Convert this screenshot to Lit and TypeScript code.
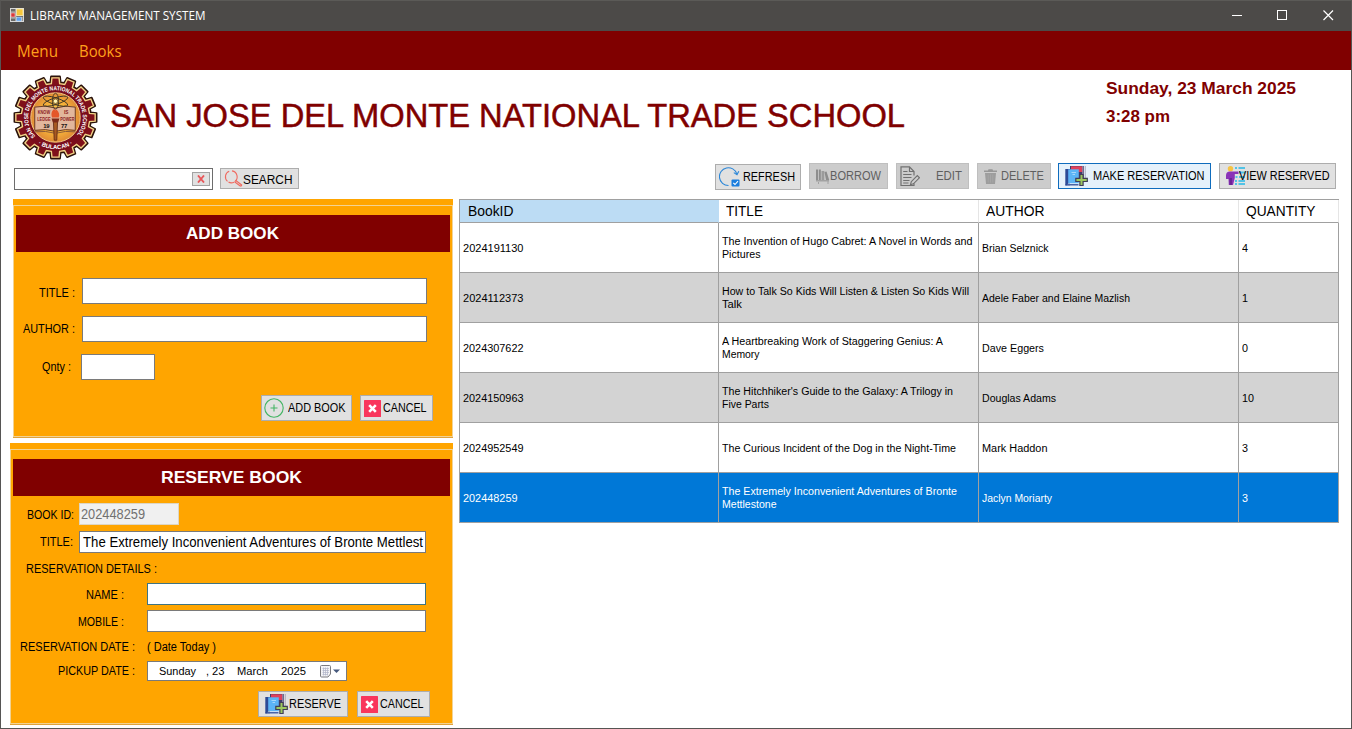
import { LitElement, html, css } from "lit";
import { customElement, property } from "lit/decorators.js";

/** Single line of text condensed or widened to an exact width. */
@customElement("fit-text")
class FitText extends LitElement {
  @property() text = "";
  @property({ type: Number }) w = 0;
  static styles = css`
    :host { display: block; flex: none; }
    span { display: inline-block; white-space: pre; transform-origin: 0 50%; }
  `;
  render() {
    return html`<span>${this.text}</span>`;
  }
  updated() {
    const s = this.renderRoot.querySelector("span") as HTMLElement;
    s.style.transform = "none";
    const natural = s.getBoundingClientRect().width;
    this.style.width = `${this.w}px`;
    s.style.transform = `scaleX(${this.w / natural})`;
  }
}

const t = (text: string, w: number, cls = "") =>
  html`<fit-text class=${cls} .text=${text} .w=${w}></fit-text>`;

const gear = (teeth: number, ro: number, ri: number, half: number) => {
  const pts: string[] = [];
  for (let i = 0; i < teeth; i++) {
    const a = (i / teeth) * Math.PI * 2 - Math.PI / 2;
    const p = (r: number, d: number) =>
      `${(r * Math.cos(a + d)).toFixed(2)},${(r * Math.sin(a + d)).toFixed(2)}`;
    pts.push(p(ri, -half * 1.35), p(ro, -half), p(ro, half), p(ri, half * 1.35));
  }
  return "M" + pts.join("L") + "Z";
};

const logo = html`<svg class="logo" viewBox="-43 -43 86 86">
  <defs>
    <radialGradient id="sun">
      <stop offset="0" stop-color="#fff08a" /><stop offset=".55" stop-color="#f8b83a" /><stop offset="1" stop-color="#e08a35" />
    </radialGradient>
    <path id="arcTop" d="M-20.300,18.900 A27.700,27.700 0 1 1 20.300,18.900" />
    <path id="arcBottom" d="M-20,25 A32,32 0 0 0 20,25" />
  </defs>
  <path d=${gear(16, 41.8, 36, 0.108)} fill="#7c1018" stroke="#2a120a" stroke-width="1.800" stroke-linejoin="round" />
  <path d=${gear(16, 40.3, 34.6, 0.09)} fill="#80101a" stroke="#f0d488" stroke-width="1.400" />
  <circle r="33.500" fill="#7a0d1c" />
  <circle r="25" fill="url(#sun)" stroke="#f0c884" stroke-width="1" />
  <g fill="#fff" font-family="Liberation Sans" font-size="6" font-weight="bold">
    <text><textPath href="#arcTop" textLength="126" lengthAdjust="spacingAndGlyphs">SAN JOSE DEL MONTE NATIONAL TRADE SCHOOL</textPath></text>
    <text><textPath href="#arcBottom" startOffset="50%" text-anchor="middle">· BULACAN ·</textPath></text>
  </g>
  <path d="M-21,-10.500Q-10,-13 0,-9.500Q10,-13 20,-10.500V13Q10,11 0,14Q-10,11 -21,13Z" fill="#e2b69c" stroke="#6b3a22" stroke-width="1" />
  <path d="M-21,14.500Q-10,13 0,16Q10,13 20,14.500" fill="none" stroke="#8a5a3a" stroke-width="1" />
  <g fill="none" stroke="#3d3426" stroke-width=".9">
    <ellipse cy="-16.500" rx="13" ry="3.400" transform="rotate(18 0 -16.5)" />
    <ellipse cy="-16.500" rx="13" ry="3.400" transform="rotate(-18 0 -16.5)" />
    <ellipse cy="-16.500" rx="3.200" ry="8" />
  </g>
  <circle cy="-16.500" r="2.300" fill="#fff3b0" stroke="#4d3a1c" stroke-width=".7" />
  <path d="M-2.200,2L-1.300,23H1.300L2.200,2Z" fill="#a85a22" stroke="#5a2410" stroke-width=".8" />
  <path d="M-4,1H4L2.600,5H-2.600Z" fill="#7c2a18" />
  <path d="M-3.500,0Q-5.500,-5 -1,-9Q-1,-6 1,-8Q5,-4 3.200,0Z" fill="#e4572a" />
  <g font-family="Liberation Sans" font-weight="bold" font-size="5.400">
    <g fill="#8c1c22">
      <text x="-18" y="-3.600" textLength="12.500" lengthAdjust="spacingAndGlyphs">KNOW</text>
      <text x="-18.500" y="3.200" textLength="13.500" lengthAdjust="spacingAndGlyphs">LEDGE</text>
      <text x="8.500" y="-3.600" textLength="4.500" lengthAdjust="spacingAndGlyphs">IS</text>
      <text x="4.800" y="3.200" textLength="14.500" lengthAdjust="spacingAndGlyphs">POWER</text>
    </g>
    <text x="-12.500" y="10.700" fill="#151010" font-size="6" textLength="6.500">19</text>
    <text x="5.500" y="10.700" fill="#151010" font-size="6" textLength="6.500">77</text>
  </g>
</svg>`;

const appIcon = html`<svg class="app-icon" viewBox="0 0 14 14">
  <rect x=".5" y=".5" width="13" height="13" fill="#6b6a68" stroke="#d8d8d8" />
  <rect x="6.500" y="1" width="6.500" height="6.500" fill="#f5c63c" stroke="#fff0b4" stroke-width=".8" />
  <rect x="1" y="5" width="4" height="4" fill="#d83a3a" stroke="#f4c4c4" stroke-width=".6" />
  <rect x="6.500" y="9.200" width="4.800" height="3.800" fill="#5aa0f0" stroke="#c4dcf8" stroke-width=".6" />
  <path d="M5.800,1V13M1,4H5M1,10H5M12,9V13" stroke="#e4e4e4" stroke-width=".7" />
</svg>`;

const searchIcon = html`<svg width="19" height="17" viewBox="0 0 19 17" fill="none" stroke="#ef6a60">
  <path d="M3.500,11.300A6,6 0 0 1 5.200,1.200M8,.9A6,6 0 0 1 10.800,11.600M4.500,12Q7,13.600 10,12.200" stroke-width="1.100" />
  <path d="M11.500,10.200L18,15.300M10.500,11.700L16.600,16.300M16.600,16.300L18,15.300" stroke-width="1.100" />
</svg>`;

const refreshIcon = html`<svg width="21" height="20" viewBox="0 0 21 20">
  <path d="M17.800,6.800A8.900,8.900 0 1 0 9.500,18.500" fill="none" stroke="#2a86d8" stroke-width="1.100" />
  <path d="M14.800,5.600L18,7.600L19.800,4.200" fill="none" stroke="#2a86d8" stroke-width="1.100" />
  <rect x="12.500" y="12.500" width="8" height="7" rx="1" fill="#1b7ede" />
  <path d="M14.300,15.800L16,17.500L19,14.200" fill="none" stroke="#fff" stroke-width="1.100" />
</svg>`;

const booksIcon = html`<svg width="15" height="15" viewBox="0 0 15 15" fill="#8d8d8d">
  <path d="M1,.5H3.200V11H1ZM4,.5H5.800V11H4Z" /><path d="M6.500,2H9.300V11H6.500Z" fill="#9b9b9b" />
  <path d="M9.500,3L11.500,2.500L14.200,11H11Z" /><path d="M1,11H14V12.500H1ZM3,13H4V15H3ZM12.500,12H13.500V15H12.500Z" fill="#a2a2a2" />
</svg>`;

const editIcon = html`<svg width="20" height="21" viewBox="0 0 20 21" fill="none" stroke="#707070" stroke-width="1.200">
  <path d="M14,9.500V5.500L9.500,.8H1V19.500H14V17.500M9.500,.8V5.500H14" />
  <path d="M3.200,5.500H7.500M3.200,8.500H11.500M3.200,11.500H11.500M3.200,14.500H9.500M3.200,17H8.500" />
  <path d="M10.500,18.700L11.300,15.700L17.300,9.700L19.400,11.800L13.400,17.800Z" fill="#cfcfcf" />
</svg>`;

const trashIcon = html`<svg width="13" height="15" viewBox="0 0 13 15">
  <path d="M0,1.500H4L4.500,.3H8.500L9,1.500H13V3H0Z" fill="#979797" />
  <path d="M1,4H12L11,15H2Z" fill="#9d9d9d" />
  <path d="M4.200,5.500V13.500M6.500,5.500V13.500M8.800,5.500V13.500" stroke="#a8a8a8" stroke-width=".8" />
</svg>`;

const addBooksIcon = html`<svg width="23" height="20" viewBox="0 0 23 20">
  <path d="M5,0H19V13H5Z" fill="#3f3b6b" /><path d="M6,.3H17.500V6H6Z" fill="#e0405a" />
  <path d="M17.300,0H18.500V13H17.300ZM19.800,0H20.600V12H19.800Z" fill="#9b9bb4" />
  <path d="M.3,3H5V19.500H.3Z" fill="#2d4a96" />
  <path d="M3.200,3.300H13.800V17.500H3.200Z" fill="#5cb4f6" /><path d="M3.200,17.500H14V19.500H1.500Z" fill="#e9f2fb" />
  <path d="M.5,18.800H13.500" stroke="#2d4a96" stroke-width="1.300" />
  <path d="M6.500,6.500H11M7.500,8.500H10" stroke="#b9e0fc" stroke-width=".8" />
  <path d="M14.900,8.500H18.100V12.300H22.300V15.500H18.100V19.700H14.900V15.500H10.800V12.300H14.900Z" fill="#9cc95e" stroke="#413d57" stroke-width="1.200" />
</svg>`;

const personIcon = html`<svg width="20" height="20" viewBox="0 0 20 20">
  <circle cx="4.500" cy="2.800" r="2.700" fill="#f6c343" />
  <path d="M0,13V9.500Q0,5.500 4,5.500H12.500V8H8.800V12L7,19H2.800L2.500,13Z" fill="#8a33b8" />
  <path d="M3.500,12H6V19H3.500Z" fill="#6b2496" />
  <path d="M9,2H11M12.500,2H19M13,6.500H19M9.500,11H11.500M13,11H19M9,15H11M12.500,15H19M9,18H11M12.500,18H19" stroke="#52c3e6" stroke-width="1.900" />
</svg>`;

const plusIcon = html`<svg width="20" height="20" viewBox="0 0 20 20" fill="none" stroke="#45b565">
  <circle cx="10" cy="10" r="9.200" stroke-width="1.100" /><path d="M10,6.500V13.500M6.500,10H13.500" stroke-width="1.100" />
</svg>`;

const crossIcon = html`<svg width="17" height="17" viewBox="0 0 17 17">
  <rect width="17" height="17" rx=".5" fill="#f9365c" /><path d="M5.200,5.200L11.800,11.800M11.800,5.200L5.200,11.800" stroke="#fff" stroke-width="2.600" />
</svg>`;

const calendarIcon = html`<svg class="cal" width="22" height="13" viewBox="0 0 22 13">
  <path d="M.5,1.500Q.5,.5 1.500,.5H9.500Q10.500,.5 10.500,1.500V9L8,12H1.500Q.5,12 .5,11Z" fill="#f4f4f6" stroke="#7b7b80" />
  <path d="M2.500,3.500H9M2.500,5.500H9M2.500,7.500H9M2.500,9.500H8M3.500,2.500V10.500M5.500,2.500V10.500M7.500,2.500V10.500" stroke="#b0b4c8" stroke-width=".7" />
  <path d="M13,4.500H20L16.500,8Z" fill="#46597d" />
</svg>`;

type Line = [string, number];
const books: { id: Line; title: Line[]; author: Line; qty: Line; selected?: boolean }[] = [
  { id: ["2024191130", 60.5], title: [["The Invention of Hugo Cabret: A Novel in Words and", 250.5], ["Pictures", 38.5]], author: ["Brian Selznick", 66.5], qty: ["4", 6] },
  { id: ["2024112373", 60.5], title: [["How to Talk So Kids Will Listen & Listen So Kids Will", 247], ["Talk", 20]], author: ["Adele Faber and Elaine Mazlish", 148], qty: ["1", 6] },
  { id: ["2024307622", 60.5], title: [["A Heartbreaking Work of Staggering Genius: A", 221], ["Memory", 37.5]], author: ["Dave Eggers", 62], qty: ["0", 6] },
  { id: ["2024150963", 60.5], title: [["The Hitchhiker's Guide to the Galaxy: A Trilogy in", 231], ["Five Parts", 47]], author: ["Douglas Adams", 74], qty: ["10", 12] },
  { id: ["2024952549", 60.5], title: [["The Curious Incident of the Dog in the Night-Time", 234]], author: ["Mark Haddon", 65.5], qty: ["3", 6] },
  { id: ["202448259", 54.5], title: [["The Extremely Inconvenient Adventures of Bronte", 235], ["Mettlestone", 54.5]], author: ["Jaclyn Moriarty", 70], qty: ["3", 6], selected: true },
];

@customElement("app-root")
class AppRoot extends LitElement {
  static styles = css`
    :host { display: block; width: 1352px; height: 729px; overflow: hidden; background: #fff; color: #000;
      font: 12.300px/14px "Liberation Sans", Arial, sans-serif; }
    * { box-sizing: border-box; }
    svg { display: block; flex: none; }
    .frame { height: 729px; border: 1px solid #565553; border-top-color: #5b5a57; display: flex; flex-direction: column; }

    .titlebar { height: 30px; flex: none; background: #4c4a48; color: #fff; display: flex; align-items: center; padding-left: 9px;
      font: 12px/16px "Open Sans", "Noto Sans", sans-serif; }
    .app-icon { width: 14px; height: 14px; margin: -2px 6px 0 0; }
    .controls { margin-left: auto; display: flex; }
    .controls svg { width: 46px; height: 30px; }
    .menubar { height: 39px; flex: none; background: #800000; color: #ffa01c; display: flex; align-items: center;
      padding: 1px 0 0 16px; gap: 21px; font: 15.500px/20px "Open Sans", "Noto Sans", sans-serif; }

    .header { height: 93px; flex: none; display: flex; color: #800000; }
    .logo { width: 85px; height: 85px; margin: 5px 0 0 12px; }
    h1 { margin: 27px 0 0 12px; font-size: 32.500px; line-height: 38px; font-weight: normal; -webkit-text-stroke: .5px #800000; }
    .dates { margin: 9px 55px 0 auto; font-weight: bold; font-size: 17px; line-height: 20px; display: flex; flex-direction: column; gap: 8px; }

    .toolbar { height: 36px; flex: none; display: flex; align-items: flex-start; padding: 0 15px 0 13px; }
    .search { width: 199px; height: 22px; margin: 5px 7px 0 0; border: 1px solid #6d6d6d; display: flex; align-items: center; justify-content: flex-end; padding-right: 2px; }
    .clear { width: 18px; height: 14px; background: #e1e1e1; border: 1px solid #a3a3a3; display: grid; place-items: center; }
    .actions { display: flex; gap: 8px; margin-left: auto; }

    .btn { border: 1px solid #adadad; background: #e1e1e1; height: 26px; display: flex; align-items: center; flex: none; }
    .btn.off { background: #cccccc; border-color: #bfbfbf; color: #5f5f5f; }
    .find { width: 79px; height: 21px; margin-top: 5px; padding: 1px 0 0 3px; }
    .find svg { margin-top: -2px; }
    .find fit-text { margin-top: 2px; }
    .refresh { width: 86px; padding-left: 3px; gap: 3px; margin-top: 1px; }
    .borrow { width: 79px; padding-left: 5px; }
    .edit { width: 73px; padding-left: 3px; gap: 16px; }
    .delete { width: 74px; padding-left: 6px; gap: 4px; }
    .make { width: 153px; padding-left: 6px; gap: 5px; margin-left: -1px; background: #e5f1fb; border-color: #0f6cbd; }
    .view { width: 117px; padding-left: 6px; }
    .view fit-text { margin-left: -7px; }

    .main { display: flex; flex: none; }
    .side { width: 444px; margin-left: 9px; margin-right: 5px; display: flex; flex-direction: column; gap: 5px; }
    .panel { background: #ffa500; padding-top: 6px; border-bottom: 1px solid #e0a33c; width: 443px; }
    .panel.add { margin-left: 3px; width: 440px; }
    .inner { border: 1px solid #f2d394; padding: 9px 2px 0; }
    .add .inner { height: 232px; }
    .reserve .inner { height: 275px; }
    .bar { height: 37px; background: #800000; color: #fff; display: flex; justify-content: center; align-items: center;
      font-size: 16.500px; line-height: 20px; font-weight: bold; padding: 0 1px 2px 0; }
    .row { display: flex; align-items: center; }
    .inp { background: #fff; border: 1px solid #7a7a7a; height: 26px; flex: none; display: flex; align-items: center; font-size: 14px; line-height: 16px; }
    .row .lab { margin-top: 3px; }
    .r1 { margin-top: 26px; padding-left: 23px; gap: 7px; }
    .r2 { margin-top: 12px; padding-left: 7px; gap: 7px; }
    .r2 .lab { margin-top: 0; }
    .r3 { margin-top: 12px; padding-left: 26px; gap: 10px; }
    .r3 .lab { margin-top: 0; }
    .w345 { width: 345px; } .w74 { width: 74px; } .w100 { width: 100px; } .w347 { width: 347px; } .w279 { width: 279px; }
    .r4 { margin-top: 15px; padding-left: 245px; gap: 8px; }
    .addbtn { width: 91px; padding-left: 2px; gap: 4px; }
    .cancel { width: 73px; padding-left: 3px; gap: 2px; }

    .reserve .inp { height: 22px; }
    .reserve .lab { margin-top: 2px; }
    .q1 { margin-top: 7px; padding-left: 14px; gap: 5px; }
    .q1 .inp { background: #f0f0f0; border-color: #ddd6c4; color: #707070; padding-left: 1px; }
    .q2 { margin-top: 6px; padding-left: 27px; gap: 6px; }
    .q2 .inp { padding-left: 3px; }
    .reserve .q2 .lab { margin-top: 0; }
    .q3 { height: 30px; padding-left: 13px; }
    .q4 { padding-left: 73px; gap: 23px; }
    .q4 .inp { border-color: #3f7482; }
    .q5 { margin-top: 5px; padding-left: 65px; gap: 23px; }
    .q6 { height: 29px; padding-left: 7px; gap: 12px; }
    .reserve .q6 .lab { margin-top: 1px; }
    .q7 { padding-left: 45px; gap: 12px; }
    .reserve .q7 .lab { margin-top: 0; }
    .reserve .picker { width: 200px; height: 20px; font-size: 11.700px; padding-left: 11px; }
    .comma { margin-left: 10px; } .day { margin-left: 3px; } .month { margin-left: 12px; } .year { margin-left: 13px; } .cal { margin-left: 14px; }
    .q8 { margin-top: 10px; padding-left: 245px; gap: 9px; }
    .resbtn { width: 90px; padding-left: 6px; gap: 1px; }

    .grid { width: 880px; border: 1px solid #a0a0a0; border-right: 0; border-bottom: 0; display: grid; grid-template-columns: 259px 260px 260px 100px; align-content: start; height: 324px; }
    .th { height: 23px; border-bottom: 1px solid #a0a0a0; border-right: 1px solid #e5e5e5; padding: 4px 0 0 7px; font-size: 14px; line-height: 15px; }
    .th.first { background: #bcdcf4; border-right-color: #bcdcf4; padding-left: 8px; }
    .td { height: 50px; border-right: 1px solid #a0a0a0; border-bottom: 1px solid #a0a0a0; padding: 0 0 1px 3px; font-size: 11.700px; line-height: 13px;
      display: flex; flex-direction: column; justify-content: center; }
    .td.alt { background: #d3d3d3; }
    .td.sel { background: #0078d7; color: #fff; }
  `;

  private cells() {
    return books.map((b, i) => {
      const c = b.selected ? "sel" : i % 2 ? "alt" : "";
      return html`
        <div class="td ${c}">${t(...b.id)}</div>
        <div class="td ${c}">${b.title.map((l) => t(...l))}</div>
        <div class="td ${c}">${t(...b.author)}</div>
        <div class="td ${c}">${t(...b.qty)}</div>`;
    });
  }

  render() {
    return html`<div class="frame">
      <div class="titlebar">
        ${appIcon}${t("LIBRARY MANAGEMENT SYSTEM", 175.5)}
        <div class="controls">
          <svg viewBox="0 0 46 30"><path d="M19,14.500H29" stroke="#fff" /></svg>
          <svg viewBox="0 0 46 30"><rect x="18.500" y="9.500" width="9" height="9" fill="none" stroke="#fff" /></svg>
          <svg viewBox="0 0 46 30"><path d="M18.500,9.500L28,19M28,9.500L18.500,19" stroke="#fff" stroke-width="1.200" /></svg>
        </div>
      </div>
      <div class="menubar">${t("Menu", 41)}${t("Books", 42.5)}</div>
      <div class="header">
        ${logo}
        <h1>${t("SAN JOSE DEL MONTE NATIONAL TRADE SCHOOL", 795)}</h1>
        <div class="dates">${t("Sunday, 23 March 2025", 190)}${t("3:28 pm", 64)}</div>
      </div>
      <div class="toolbar">
        <div class="search"><div class="clear"><svg width="8" height="8" viewBox="0 0 8 8"><path d="M1,.5L7,7.500M7,.5L1,7.500" stroke="#e8575a" stroke-width="1.900" /></svg></div></div>
        <div class="btn find">${searchIcon}${t("SEARCH", 49.5)}</div>
        <div class="actions">
          <div class="btn refresh">${refreshIcon}${t("REFRESH", 52)}</div>
          <div class="btn borrow off">${booksIcon}${t("BORROW", 51)}</div>
          <div class="btn edit off">${editIcon}${t("EDIT", 26)}</div>
          <div class="btn delete off">${trashIcon}${t("DELETE", 43)}</div>
          <div class="btn make">${addBooksIcon}${t("MAKE RESERVATION", 111.5)}</div>
          <div class="btn view">${personIcon}${t("VIEW RESERVED", 90.5)}</div>
        </div>
      </div>
      <div class="main">
        <div class="side">
          <div class="panel add"><div class="inner">
            <div class="bar">${t("ADD BOOK", 93)}</div>
            <div class="row r1">${t("TITLE :", 36, "lab")}<div class="inp w345"></div></div>
            <div class="row r2">${t("AUTHOR :", 52, "lab")}<div class="inp w345"></div></div>
            <div class="row r3">${t("Qnty :", 29, "lab")}<div class="inp w74"></div></div>
            <div class="row r4">
              <div class="btn addbtn">${plusIcon}${t("ADD BOOK", 57.5)}</div>
              <div class="btn cancel">${crossIcon}${t("CANCEL", 43.5)}</div>
            </div>
          </div></div>
          <div class="panel reserve"><div class="inner">
            <div class="bar">${t("RESERVE BOOK", 141)}</div>
            <div class="row q1">${t("BOOK ID:", 47, "lab")}<div class="inp w100">${t("202448259", 64)}</div></div>
            <div class="row q2">${t("TITLE:", 33, "lab")}<div class="inp w347">${t("The Extremely Inconvenient Adventures of Bronte Mettlest", 340)}</div></div>
            <div class="row q3">${t("RESERVATION DETAILS :", 131, "lab")}</div>
            <div class="row q4">${t("NAME :", 38, "lab")}<div class="inp w279"></div></div>
            <div class="row q5">${t("MOBILE :", 46, "lab")}<div class="inp w279"></div></div>
            <div class="row q6">${t("RESERVATION DATE :", 115, "lab")}${t("( Date Today )", 69, "lab")}</div>
            <div class="row q7">${t("PICKUP DATE :", 77, "lab")}
              <div class="inp picker">${t("Sunday", 37)}${t(",", 3, "comma")}${t("23", 12.5, "day")}${t("March", 31, "month")}${t("2025", 25, "year")}${calendarIcon}</div>
            </div>
            <div class="row q8">
              <div class="btn resbtn">${addBooksIcon}${t("RESERVE", 52)}</div>
              <div class="btn cancel">${crossIcon}${t("CANCEL", 43.5)}</div>
            </div>
          </div></div>
        </div>
        <div class="grid">
          <div class="th first">${t("BookID", 45.5)}</div>
          <div class="th">${t("TITLE", 37)}</div>
          <div class="th">${t("AUTHOR", 58.5)}</div>
          <div class="th">${t("QUANTITY", 69.5)}</div>
          ${this.cells()}
        </div>
      </div>
    </div>`;
  }
}
